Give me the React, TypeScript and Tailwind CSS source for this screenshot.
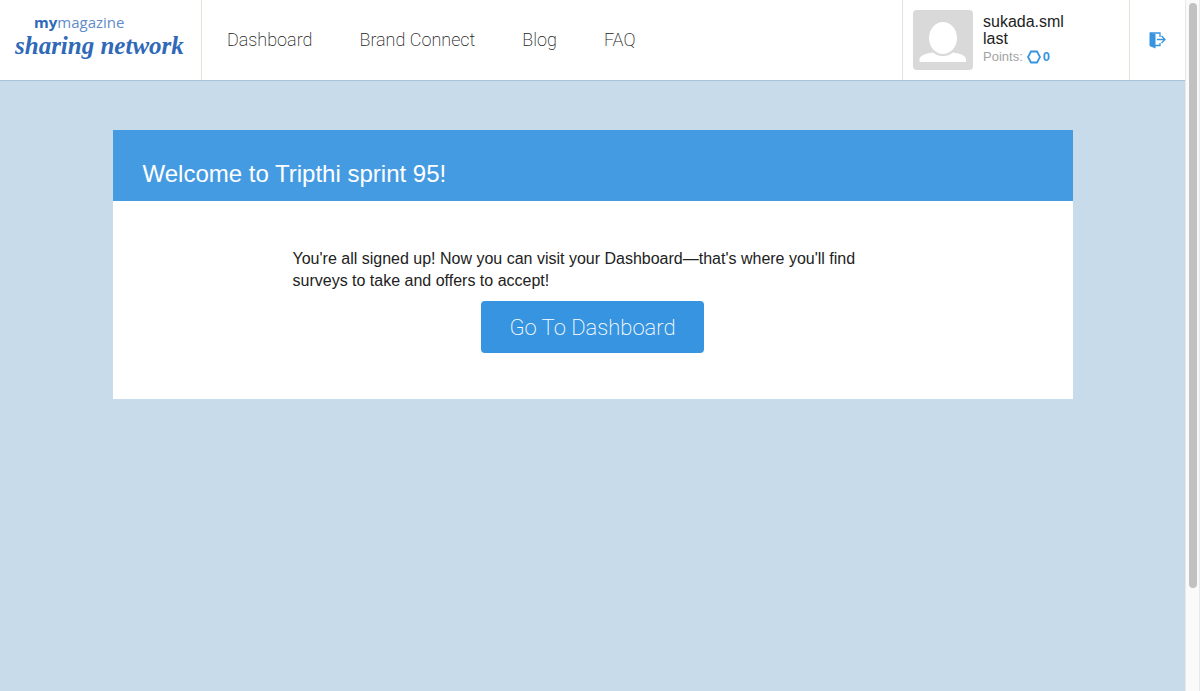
import React from "react";

const links = ["Dashboard", "Brand Connect", "Blog", "FAQ"];

function Logo() {
  return (
    <a href="#home" className="flex w-[202px] shrink-0 items-center justify-center border-r border-[#e3e2d8]">
      <svg width="176" height="56" viewBox="0 0 176 56" role="img" aria-label="mymagazine sharing network">
        <text x="21" y="16" fontFamily="'Open Sans', sans-serif" fontSize="15" fill="#5f8cc8">
          <tspan fontWeight="700" fill="#2f69b8">my</tspan>
          <tspan fontWeight="400">magazine</tspan>
        </text>
        <text x="2" y="42" fontFamily="'Liberation Serif', serif" fontSize="25" fontWeight="700" fontStyle="italic" fill="#2f69b8">
          sharing network
        </text>
      </svg>
    </a>
  );
}

function Avatar() {
  return (
    <svg width="60" height="60" viewBox="0 0 60 60" className="shrink-0 rounded" aria-hidden="true">
      <rect width="60" height="60" fill="#d9d9d9" />
      <path d="M6.500 52V49.500C6.500 46 12 43.500 20 42.500C23 45 26 46 30 46C34 46 37 45 40 42.500C48 43.500 53 46 53 49.500V52Z" fill="#fff" />
      <ellipse cx="30" cy="28.500" rx="15" ry="17" fill="#d9d9d9" />
      <ellipse cx="30" cy="28" rx="14" ry="16" fill="#fff" />
    </svg>
  );
}

function Account() {
  return (
    <div className="flex w-[228px] shrink-0 items-start gap-[10px] border-x border-[#e3e2d8] p-[10px]">
      <Avatar />
      <div className="pt-[3px] text-base leading-[17px] text-[#222]">
        <div>sukada.sml</div>
        <div>last</div>
        <div className="mt-px flex items-center text-[13px] text-[#a3a3a3]">
          Points:
          <svg width="14" height="14" viewBox="0 0 14 14" className="ml-1" aria-hidden="true">
            <path d="M4 1.500H10L13 7L10 12.500H4L1 7Z" fill="none" stroke="#3794e0" strokeWidth="1.800" />
          </svg>
          <span className="ml-0.5 font-bold text-[#3794e0]">0</span>
        </div>
      </div>
    </div>
  );
}

export default function App() {
  return (
    <div className="flex h-screen bg-[#c8dbea] font-['Liberation_Sans',Arial,sans-serif]">
      <div className="min-w-0 flex-1">
        <header className="flex h-[81px] border-b border-[#a9c3d8] bg-white">
          <Logo />
          <nav className="flex flex-1 items-center gap-[47px] pl-[25px] font-['Roboto',sans-serif] text-lg font-extralight text-[#222]">
            {links.map((l) => (
              <a key={l} href={"#" + l} className="whitespace-nowrap">{l}</a>
            ))}
          </nav>
          <Account />
          <button type="button" aria-label="Sign out" className="flex w-[55px] shrink-0 items-center justify-center">
            <svg width="17" height="17" viewBox="0 0 17 17" aria-hidden="true">
              <path d="M0.500 0.500L6.500 2V16.500L0.500 14Z" fill="#3794e0" />
              <path d="M1 1H11V5M11 11V13.500H6M8 7.500H15.500M12.500 4L16 7.500L12.500 11" fill="none" stroke="#3794e0" strokeWidth="1.300" />
            </svg>
          </button>
        </header>
        <main className="mx-auto mt-[49px] max-w-[960px] bg-white">
          <h1 className="bg-[#459be2] px-[30px] pt-[29px] pb-3 text-2xl leading-[30px] text-white">
            Welcome to Tripthi sprint 95!
          </h1>
          <div className="mx-auto flex max-w-[600px] flex-col items-center pt-[47px] pb-[46px]">
            <p className="w-full text-base leading-[22px] text-[#222]">
              You're all signed up! Now you can visit your Dashboard—that's where you'll find surveys to take and offers to accept!
            </p>
            <button type="button" className="mt-[9px] h-[52px] rounded bg-[#3794e0] px-7 font-['Roboto',sans-serif] text-[22px] font-extralight text-white">
              Go To Dashboard
            </button>
          </div>
        </main>
      </div>
      <div className="w-[15px] shrink-0 border-x border-[#e8e8e8] bg-[#fafafa] px-[2px] pt-[3px]" aria-hidden="true">
        <div className="mx-auto h-[85%] w-2 rounded-full bg-[#c1c1c1]" />
      </div>
    </div>
  );
}
